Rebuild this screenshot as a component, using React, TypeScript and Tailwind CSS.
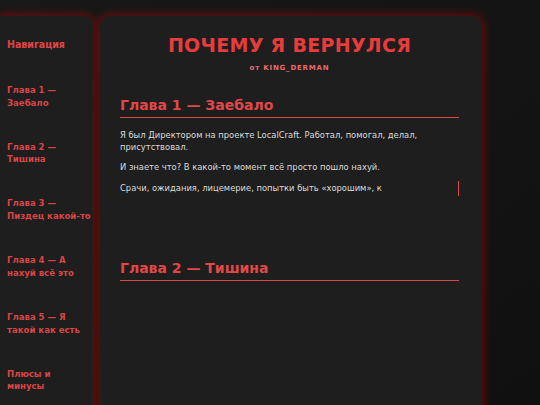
const chapters = [
  ["Глава 1 —", "Заебало"],
  ["Глава 2 —", "Тишина"],
  ["Глава 3 —", "Пиздец какой-то"],
  ["Глава 4 — А", "нахуй всё это"],
  ["Глава 5 — Я", "такой как есть"],
  ["Плюсы и", "минусы"],
];

export default function App() {
  return (
    <div className="h-[405px] overflow-hidden bg-gradient-to-br from-[#181818] to-[#101010] font-['DejaVu_Sans',sans-serif]">
      <div className="flex gap-[7px] pt-4">
        {/* sidebar */}
        <aside className="w-[93px] h-[460px] shrink-0 bg-[#1e1e1e] rounded-r-[9px] shadow-[0_0_9px_2px_rgba(200,0,0,0.45)] pl-[7px] pt-[22px] font-['DejaVu_Sans_Condensed','DejaVu_Sans',sans-serif]">
          <div className="text-[10.5px] font-bold text-[#e04545] leading-[13px]">Навигация</div>
          <nav className="mt-[33px] flex flex-col gap-[31.3px]">
            {chapters.map(([a, b]) => (
              <a key={a} className="text-[9.5px] font-bold text-[#d94545] leading-[12.7px] whitespace-nowrap">
                {a}
                <br />
                {b}
              </a>
            ))}
          </nav>
        </aside>

        {/* main panel */}
        <main className="w-[382px] h-[460px] shrink-0 bg-[#1e1e1e] rounded-[10px] shadow-[0_0_9px_2px_rgba(200,0,0,0.45)] pl-5 pr-[23px] pt-4">
          <h1 className="text-center text-[19px] font-bold text-[#e63c3c] leading-[26px] tracking-[0.3px]">
            ПОЧЕМУ Я ВЕРНУЛСЯ
          </h1>
          <div className="text-center text-[7px] font-bold text-[#ea6b6b] tracking-[0.8px] mt-[5px]">
            от KING_DERMAN
          </div>

          <section className="mt-[22px] h-[150px]">
            <h2 className="text-[14px] font-bold text-[#e04848] leading-[18px] pb-[3px] border-b border-solid border-b-[#d84848]">
              Глава 1 — Заебало
            </h2>
            <div className="mt-[11px] text-[9.3px] text-[#dcdcdc] leading-[12.7px] font-['DejaVu_Sans_Condensed','DejaVu_Sans',sans-serif]">
              <p>Я был Директором на проекте LocalCraft. Работал, помогал, делал, присутствовал.</p>
              <p className="mt-[7.5px]">И знаете что? В какой-то момент всё просто пошло нахуй.</p>
              <p className="mt-[7px] py-[1px] border-r border-solid border-r-[#d84848]">
                Срачи, ожидания, лицемерие, попытки быть «хорошим», к
              </p>
            </div>
          </section>

          <section className="mt-[13px]">
            <h2 className="text-[14px] font-bold text-[#e04848] leading-[18px] pb-[3px] border-b border-solid border-b-[#d84848]">
              Глава 2 — Тишина
            </h2>
          </section>
        </main>
      </div>
    </div>
  );
}
